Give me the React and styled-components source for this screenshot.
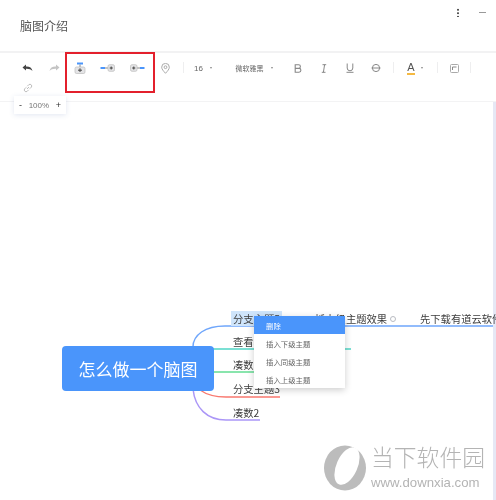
import React from 'react';
import styled, { createGlobalStyle } from 'styled-components';

const GlobalStyle = createGlobalStyle`
  html, body {
    margin: 0;
    padding: 0;
    background: #fff;
  }
  * {
    box-sizing: border-box;
  }
`;

const Page = styled.div`
  position: relative;
  width: 496px;
  height: 500px;
  overflow: hidden;
  background: #fff;
  display: flex;
  flex-direction: column;
  font-family: "Noto Sans CJK SC", "Liberation Sans", sans-serif;
  color: #555;
  filter: blur(0.35px);
`;

const Header = styled.header`
  height: 53px;
  flex: none;
  display: flex;
  align-items: center;
  justify-content: space-between;
  padding: 0 10px 0 20px;
  border-bottom: 2px solid #f2f2f3;
`;

const Title = styled.h1`
  margin: 0;
  font-size: 12px;
  font-weight: 400;
  color: #555;
`;

const WindowButtons = styled.div`
  display: flex;
  align-items: center;
  gap: 20px;
  margin-bottom: 27px;
`;

const MoreDots = styled.div`
  width: 2px;
  height: 9px;
  background: radial-gradient(circle, #555 0.9px, transparent 1.1px) 0 0 / 2px 3.5px;
`;

const MinusMark = styled.div`
  width: 7px;
  height: 1px;
  background: #999;
`;

const Toolbar = styled.div`
  height: 49px;
  flex: none;
  display: flex;
  flex-wrap: wrap;
  align-content: flex-start;
  padding: 5px 0 0 14px;
  border-bottom: 1px solid #f3f3f4;
`;

const ToolButton = styled.div`
  width: ${p => p.$w || 26}px;
  height: 20px;
  padding-left: ${p => p.$pad || 0}px;
  display: flex;
  align-items: center;
  justify-content: center;
  gap: ${p => p.$gap || 6}px;
  color: ${p => p.$color || '#666'};
  font-size: ${p => p.$size || 11}px;
  font-family: "Liberation Sans", "Noto Sans CJK SC", sans-serif;
  flex: none;
`;

const FontLabel = styled.span`
  font-size: 7px;
  color: #666;
`;

const Caret = styled.span`
  width: 0;
  height: 0;
  border-left: 1.5px solid transparent;
  border-right: 1.5px solid transparent;
  border-top: 2px solid #888;
`;

const Divider = styled.div`
  width: 1px;
  height: 11px;
  margin: 4px ${p => p.$right || 5}px 0 ${p => p.$left || 5}px;
  background: #eeeeef;
  flex: none;
`;

const ColorA = styled.span`
  font-size: 11px;
  line-height: 11px;
  color: #555;
  border-bottom: 2px solid #f5b942;
`;

const Workspace = styled.div`
  position: relative;
  flex: 1;
  border-right: 3px solid #e6e8f5;
`;

const ZoomBox = styled.div`
  position: absolute;
  left: 14px;
  top: -6px;
  width: 52px;
  height: 18px;
  display: flex;
  align-items: center;
  justify-content: space-between;
  padding: 0 5px;
  background: #fff;
  box-shadow: 0 1px 5px rgba(70, 100, 170, 0.16);
  font-family: "Liberation Sans", sans-serif;
  font-size: 8px;
  color: #777;
  z-index: 2;
`;

const ZoomSign = styled.span`
  font-size: 9px;
  color: #333;
`;

const Highlight = styled.div`
  position: absolute;
  left: 65px;
  top: 52px;
  width: 90px;
  height: 41px;
  border: 2px solid #e3202c;
  z-index: 3;
`;

const Lines = styled.svg`
  position: absolute;
  left: 0;
  top: 0;
`;

const RootNode = styled.div`
  position: absolute;
  left: 62px;
  top: 244px;
  width: 152px;
  height: 45px;
  display: flex;
  align-items: center;
  justify-content: center;
  border-radius: 4px;
  background: #4a95fb;
  color: #fff;
  font-size: 17px;
`;

const Topic = styled.div`
  position: absolute;
  left: ${p => p.$x}px;
  top: ${p => p.$y}px;
  height: 15px;
  padding: 0 2px;
  display: flex;
  align-items: center;
  gap: 3px;
  white-space: nowrap;
  font-size: 10.3px;
  color: #3c3c3c;
  background: ${p => (p.$active ? '#cfe5fb' : 'transparent')};
`;

const NoteDot = styled.span`
  width: 6px;
  height: 6px;
  border-radius: 50%;
  border: 1.5px solid #b9bcc2;
`;

const ContextMenu = styled.ul`
  position: absolute;
  left: 254px;
  top: 214px;
  width: 91px;
  margin: 0;
  padding: 0;
  list-style: none;
  background: #fff;
  box-shadow: 0 2px 7px rgba(0, 0, 0, 0.2);
  z-index: 2;
`;

const MenuItem = styled.li`
  height: 18px;
  padding-left: 12px;
  display: flex;
  align-items: center;
  font-size: 7.4px;
  color: ${p => (p.$active ? '#fff' : '#666')};
  background: ${p => (p.$active ? '#4a95fb' : 'transparent')};
`;

const Watermark = styled.div`
  position: absolute;
  left: 323px;
  top: 342px;
  display: flex;
  align-items: flex-start;
  gap: 4px;
  color: #b4b4b4;
  z-index: 4;
`;

const WatermarkText = styled.div`
  display: flex;
  flex-direction: column;
  align-items: flex-start;
`;

const WatermarkName = styled.div`
  font-size: 22.8px;
  line-height: 26px;
  font-weight: 300;
`;

const WatermarkUrl = styled.div`
  margin-top: 5px;
  font-family: "Liberation Sans", sans-serif;
  font-size: 13.2px;
  line-height: 15px;
`;

const Icon = ({ children, w = 14, h = 14, vb = '0 0 14 14' }) => (
  <svg width={w} height={h} viewBox={vb} fill="none">
    {children}
  </svg>
);

const blue = '#4a95fb';

const App = () => (
  <Page>
    <GlobalStyle />
    <Header>
      <Title>脑图介绍</Title>
      <WindowButtons>
        <MoreDots />
        <MinusMark />
      </WindowButtons>
    </Header>
    <Toolbar>
      <ToolButton $w={27}>
        <Icon w={11} h={8} vb="0 0 11 8">
          <path d="M0.5 3.5 L4 0.5 V2.4 C7.5 2.2 9.8 3.6 10.5 7 C9 5.2 7 4.6 4 4.7 V6.6 Z" fill="#444" />
        </Icon>
      </ToolButton>
      <ToolButton>
        <Icon w={11} h={8} vb="0 0 11 8">
          <path d="M10.5 3.5 L7 0.5 V2.4 C3.5 2.2 1.2 3.6 0.5 7 C2 5.2 4 4.6 7 4.7 V6.6 Z" fill="#c4c4c4" />
        </Icon>
      </ToolButton>
      <ToolButton $w={25}>
        <Icon w={12} h={12} vb="0 0 12 12">
          <rect x="3" y="0.5" width="6" height="2" fill={blue} />
          <path d="M6 2.5 V5" stroke="#888" />
          <rect x="1" y="5" width="10" height="6.5" rx="1.5" fill="#e4e4e6" stroke="#bbb" strokeWidth="0.7" />
          <path d="M4 8.2 H8 M6 6.3 V10" stroke="#444" />
        </Icon>
      </ToolButton>
      <ToolButton $w={30}>
        <Icon w={15} h={8} vb="0 0 15 8">
          <rect x="0.5" y="3" width="4.5" height="2" fill={blue} />
          <path d="M5 4 H8" stroke="#888" />
          <rect x="8" y="0.7" width="6.5" height="6.6" rx="1.5" fill="#e4e4e6" stroke="#bbb" strokeWidth="0.7" />
          <path d="M9.7 4 H12.8 M11.2 2.5 V5.5" stroke="#444" />
        </Icon>
      </ToolButton>
      <ToolButton $w={30}>
        <Icon w={15} h={8} vb="0 0 15 8">
          <rect x="10" y="3" width="4.5" height="2" fill={blue} />
          <path d="M7 4 H10" stroke="#888" />
          <rect x="0.5" y="0.7" width="6.5" height="6.6" rx="1.5" fill="#e4e4e6" stroke="#bbb" strokeWidth="0.7" />
          <path d="M2.2 4 H5.3 M3.8 2.5 V5.5" stroke="#444" />
        </Icon>
      </ToolButton>
      <ToolButton>
        <Icon w={9} h={11} vb="0 0 9 11">
          <path d="M4.5 10.3 C2.5 8 0.7 6.3 0.7 4.2 A3.8 3.8 0 0 1 8.3 4.2 C8.3 6.3 6.5 8 4.5 10.3 Z" stroke="#aaa" />
          <circle cx="4.5" cy="4.2" r="1.4" stroke="#aaa" />
        </Icon>
      </ToolButton>
      <Divider />
      <ToolButton $w={28} $size={8} $gap={7}>
        16 <Caret />
      </ToolButton>
      <ToolButton $w={68} $pad={6} $gap={7}>
        <FontLabel>微软雅黑</FontLabel>
        <Caret />
      </ToolButton>
      <ToolButton>
        <Icon w={8} h={9} vb="0 0 8 9">
          <path d="M1.2 0.8 H4.6 A1.8 1.8 0 0 1 4.6 4.4 H1.2 Z M1.2 4.4 H5 A1.9 1.9 0 0 1 5 8.2 H1.2 Z" stroke="#888" strokeWidth="1.1" />
        </Icon>
      </ToolButton>
      <ToolButton>
        <Icon w={6} h={9} vb="0 0 6 9">
          <path d="M1.5 0.7 H5.2 M0.8 8.3 H4.5 M3.6 0.7 L2.4 8.3" stroke="#888" />
        </Icon>
      </ToolButton>
      <ToolButton>
        <Icon w={8} h={10} vb="0 0 8 10">
          <path d="M1.2 0.5 V5 A2.8 2.8 0 0 0 6.8 5 V0.5 M0.5 9.3 H7.5" stroke="#888" />
        </Icon>
      </ToolButton>
      <ToolButton>
        <Icon w={10} h={10} vb="0 0 10 10">
          <circle cx="5" cy="5" r="3.6" stroke="#888" />
          <path d="M0.5 5 H9.5" stroke="#888" />
        </Icon>
      </ToolButton>
      <Divider $left={4} $right={7} />
      <ToolButton $w={28}>
        <ColorA>A</ColorA>
        <Caret />
      </ToolButton>
      <Divider $left={8} $right={3} />
      <ToolButton>
        <Icon w={9} h={9} vb="0 0 9 9">
          <rect x="0.5" y="0.5" width="8" height="8" rx="1" stroke="#aaa" />
          <path d="M2.5 3 H6.5 M2.5 3 V6" stroke="#888" />
        </Icon>
      </ToolButton>
      <Divider $left={3} $right={0} />
      <ToolButton $w={27}>
        <Icon w={10} h={10} vb="0 0 10 10">
          <path d="M4 6 L6 4 M3.2 4.3 L1.6 5.9 A1.8 1.8 0 0 0 4.1 8.4 L5.7 6.8 M4.3 3.2 L5.9 1.6 A1.8 1.8 0 0 1 8.4 4.1 L6.8 5.7" stroke="#bdbdbd" />
        </Icon>
      </ToolButton>
    </Toolbar>
    <Workspace>
      <ZoomBox>
        <ZoomSign>-</ZoomSign>
        100%
        <ZoomSign>+</ZoomSign>
      </ZoomBox>
      <Lines width="493" height="398" viewBox="0 102 493 398" fill="none">
        <path d="M193 347 C193 335 205 326 225 326 H493" stroke="#6fa6fb" strokeWidth="1.5" />
        <path d="M205 349 H351" stroke="#4fd6c6" strokeWidth="1.3" />
        <path d="M205 372 H278" stroke="#62dc92" strokeWidth="1.3" />
        <path d="M200 390 C207 395 214 397 226 397 H280" stroke="#f9786f" strokeWidth="1.3" />
        <path d="M193 389 C195 408 207 420 226 420 H260" stroke="#ab96f7" strokeWidth="1.5" />
      </Lines>
      <RootNode>怎么做一个脑图</RootNode>
      <Topic $x={231} $y={209} $active>分支主题5</Topic>
      <Topic $x={313} $y={209}>
        插上级主题效果 <NoteDot />
      </Topic>
      <Topic $x={418} $y={209}>先下载有道云软件</Topic>
      <Topic $x={231} $y={232}>查看本地文件夹中文件1</Topic>
      <Topic $x={231} $y={255}>凑数1</Topic>
      <Topic $x={231} $y={279}>分支主题3</Topic>
      <Topic $x={231} $y={303}>凑数2</Topic>
      <ContextMenu>
        <MenuItem $active>删除</MenuItem>
        <MenuItem>插入下级主题</MenuItem>
        <MenuItem>插入同级主题</MenuItem>
        <MenuItem>插入上级主题</MenuItem>
      </ContextMenu>
      <Watermark>
        <svg width="44" height="48" viewBox="0 0 44 48" fill="none">
          <ellipse cx="22" cy="24" rx="21" ry="22.5" fill="#bcbcbc" />
          <ellipse cx="24" cy="22" rx="10.5" ry="20" transform="rotate(24 24 22)" fill="#fff" />
        </svg>
        <WatermarkText>
          <WatermarkName>当下软件园</WatermarkName>
          <WatermarkUrl>www.downxia.com</WatermarkUrl>
        </WatermarkText>
      </Watermark>
    </Workspace>
    <Highlight />
  </Page>
);

export default App;
